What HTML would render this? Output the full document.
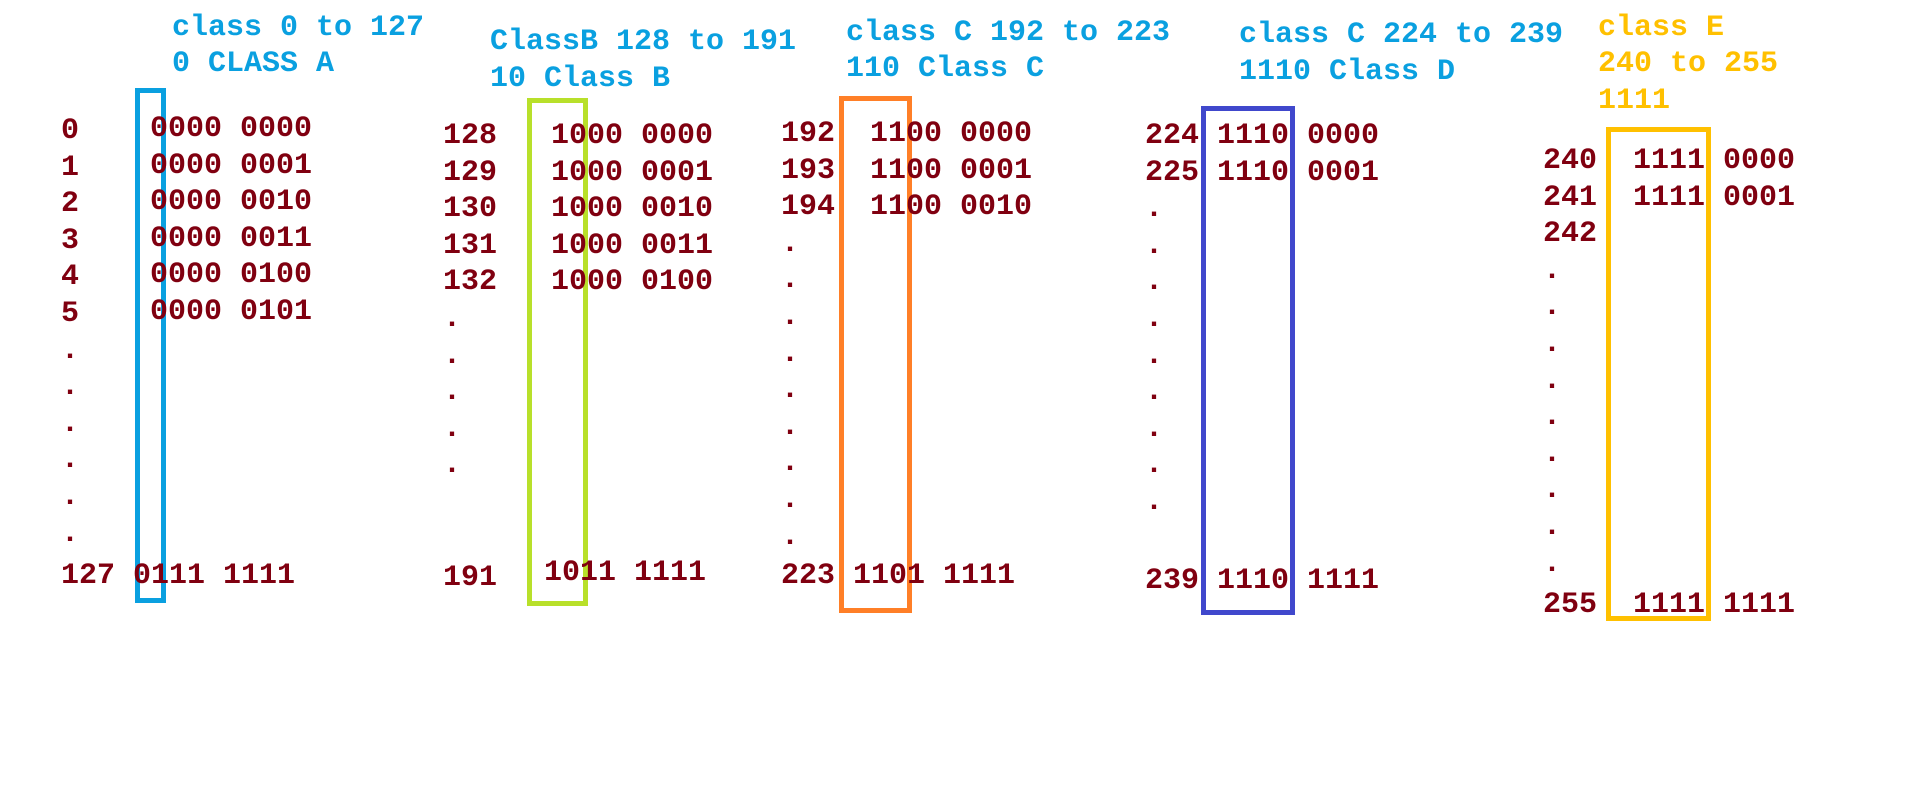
<!DOCTYPE html>
<html><head><meta charset="utf-8"><style>
body{margin:0;width:1914px;height:806px;background:#fff;position:relative;overflow:hidden;font-family:"Liberation Mono","DejaVu Sans Mono",monospace;font-weight:bold;font-size:30px;}
.t{position:absolute;line-height:36.6px;white-space:pre;color:#800010;}
.h{position:absolute;line-height:36.6px;white-space:pre;color:#0aa0e0;}
.b{position:absolute;box-sizing:border-box;border:5px solid;}
</style></head><body>
<div class="h" style="left:172px;top:10px">class 0 to 127</div>
<div class="h" style="left:172px;top:46px">0 CLASS A</div>
<div class="h" style="left:490px;top:24px">ClassB 128 to 191</div>
<div class="h" style="left:490px;top:61px">10 Class B</div>
<div class="h" style="left:846px;top:15px">class C 192 to 223</div>
<div class="h" style="left:846px;top:51px">110 Class C</div>
<div class="h" style="left:1239px;top:17px">class C 224 to 239</div>
<div class="h" style="left:1239px;top:54px">1110 Class D</div>
<div class="h" style="left:1598px;top:10px;color:#ffc000">class E</div>
<div class="h" style="left:1598px;top:46px;color:#ffc000">240 to 255</div>
<div class="h" style="left:1598px;top:83px;color:#ffc000">1111</div>

<div class="b" style="left:135px;top:88px;width:31px;height:515px;border-color:#0aa0e0"></div>
<div class="b" style="left:527px;top:98px;width:61px;height:508px;border-color:#b8e02a"></div>
<div class="b" style="left:839px;top:96px;width:73px;height:517px;border-color:#ff7f27"></div>
<div class="b" style="left:1201px;top:106px;width:94px;height:509px;border-color:#4048cc"></div>
<div class="b" style="left:1606px;top:127px;width:105px;height:494px;border-color:#ffc000"></div>

<div class="t" style="left:61px;top:113px">0
1
2
3
4
5
.
.
.
.
.
.</div>
<div class="t" style="left:150px;top:111px">0000 0000
0000 0001
0000 0010
0000 0011
0000 0100
0000 0101</div>
<div class="t" style="left:61px;top:558px">127 0111 1111</div>

<div class="t" style="left:443px;top:118px">128
129
130
131
132
.
.
.
.
.</div>
<div class="t" style="left:551px;top:118px">1000 0000
1000 0001
1000 0010
1000 0011
1000 0100</div>
<div class="t" style="left:443px;top:560px">191</div>
<div class="t" style="left:544px;top:555px">1011 1111</div>

<div class="t" style="left:781px;top:116px">192
193
194
.
.
.
.
.
.
.
.
.</div>
<div class="t" style="left:870px;top:116px">1100 0000
1100 0001
1100 0010</div>
<div class="t" style="left:781px;top:558px">223 1101 1111</div>

<div class="t" style="left:1145px;top:118px">224
225
.
.
.
.
.
.
.
.
.</div>
<div class="t" style="left:1217px;top:118px">1110 0000
1110 0001</div>
<div class="t" style="left:1145px;top:563px">239 1110 1111</div>

<div class="t" style="left:1543px;top:143px">240
241
242
.
.
.
.
.
.
.
.
.</div>
<div class="t" style="left:1633px;top:143px">1111 0000
1111 0001</div>
<div class="t" style="left:1543px;top:587px">255</div>
<div class="t" style="left:1633px;top:587px">1111 1111</div>
</body></html>
